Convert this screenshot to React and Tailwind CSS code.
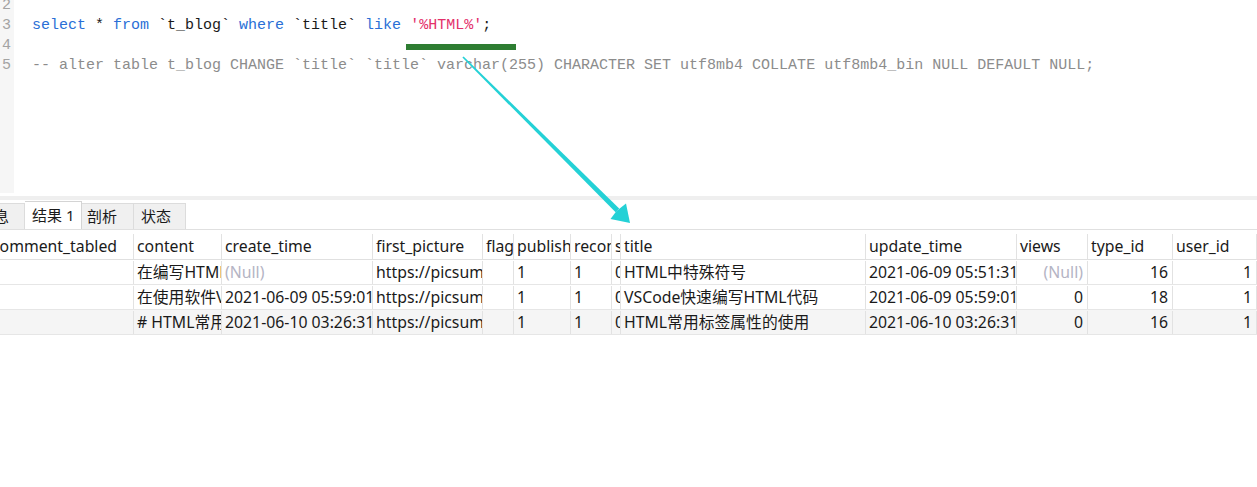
import React from "react";

const codeFont = { fontFamily: '"Liberation Mono", "DejaVu Sans Mono", monospace' };
const uiFont = { fontFamily: '"Noto Sans", "Noto Sans CJK SC", sans-serif' };

// column widths follow the grid lines in the result view
const columns = [
  { key: "comment_tabled", w: "w-[145px]" },
  { key: "content", w: "w-[88px]" },
  { key: "create_time", w: "w-[151px]" },
  { key: "first_picture", w: "w-[110px]" },
  { key: "flag", w: "w-[31px]" },
  { key: "publish", w: "w-[57px]" },
  { key: "recommend", w: "w-[41px]" },
  { key: "share_statement", w: "w-[9px]" },
  { key: "title", w: "w-[245px]" },
  { key: "update_time", w: "w-[151px]" },
  { key: "views", w: "w-[71px]", right: true },
  { key: "type_id", w: "w-[85px]", right: true },
  { key: "user_id", w: "w-[84px]", right: true },
];

const rows = [
  {
    comment_tabled: "",
    content: "在编写HTML页面时",
    create_time: null,
    first_picture: "https://picsum.photos",
    flag: "",
    publish: "1",
    recommend: "1",
    share_statement: "0",
    title: "HTML中特殊符号",
    update_time: "2021-06-09 05:51:31",
    views: null,
    type_id: "16",
    user_id: "1",
  },
  {
    comment_tabled: "",
    content: "在使用软件VSCode",
    create_time: "2021-06-09 05:59:01",
    first_picture: "https://picsum.photos",
    flag: "",
    publish: "1",
    recommend: "1",
    share_statement: "0",
    title: "VSCode快速编写HTML代码",
    update_time: "2021-06-09 05:59:01",
    views: "0",
    type_id: "18",
    user_id: "1",
  },
  {
    comment_tabled: "",
    content: "# HTML常用标签",
    create_time: "2021-06-10 03:26:31",
    first_picture: "https://picsum.photos",
    flag: "",
    publish: "1",
    recommend: "1",
    share_statement: "0",
    title: "HTML常用标签属性的使用",
    update_time: "2021-06-10 03:26:31",
    views: "0",
    type_id: "16",
    user_id: "1",
  },
];

const Kw = ({ children }) => <span className="text-[#2a6fd6]">{children}</span>;

const Cell = ({ col, children, isNull }) => (
  <div
    className={`${col.w} shrink-0 h-full border-r border-[#e2e2e2] overflow-hidden whitespace-nowrap flex items-center ${
      col.right ? "justify-end pr-[4px]" : "pl-[3px]"
    } ${isNull ? "text-[#b4b4c4]" : "text-[#1a1a1a]"}`}
  >
    {children}
  </div>
);

const App = () => {
  return (
    <div className="relative w-[1257px] h-[487px] overflow-hidden bg-white select-none">
      {/* Query editor */}
      <div className="flex h-[196px]" style={codeFont}>
        <div className="w-[14px] h-[193px] bg-[#f6f6f6] shrink-0 overflow-hidden">
          <div className="-mt-[4px] pl-[2px] text-[15px] leading-[20px] text-[#a3a3a3]">
            <div>2</div>
            <div>3</div>
            <div>4</div>
            <div>5</div>
          </div>
        </div>
        <div className="pl-[18px] -mt-[4px] text-[15px] leading-[20px] whitespace-pre text-[#1a1a1a]">
          <div> </div>
          <div>
            <Kw>select</Kw> * <Kw>from</Kw> `t_blog` <Kw>where</Kw> `title` <Kw>like</Kw>{" "}
            <span className="text-[#e3306a]">'%HTML%'</span>;
          </div>
          <div> </div>
          <div className="text-[#8c8c8c]">
            -- alter table t_blog CHANGE `title` `title` varchar(255) CHARACTER SET utf8mb4 COLLATE utf8mb4_bin NULL DEFAULT NULL;
          </div>
        </div>
      </div>

      {/* Splitter */}
      <div className="h-[4px] bg-[#efefef]" />

      {/* Result tabs */}
      <div className="flex items-end h-[29px] text-[15px] text-[#1a1a1a]" style={uiFont}>
        <div className="-ml-[28px] w-[53px] h-[26px] pl-[7px] flex items-center bg-[#f0f0f0] border-t border-r border-[#dcdcdc] shrink-0">
          信息
        </div>
        <div className="w-[57px] h-[28px] pl-[7px] flex items-center bg-white border-t border-r border-[#d4d4d4] shrink-0">
          结果 1
        </div>
        <div className="w-[52px] h-[26px] pl-[5px] flex items-center bg-[#f0f0f0] border-t border-r border-[#dcdcdc] shrink-0">
          剖析
        </div>
        <div className="w-[52px] h-[26px] pl-[7px] flex items-center bg-[#f0f0f0] border-t border-r border-[#dcdcdc] shrink-0">
          状态
        </div>
      </div>

      {/* Result grid */}
      <div className="-ml-[11px] text-[15.8px]" style={uiFont}>
        <div className="flex h-[31px] border-t border-b border-[#e0e0e0] pt-[4px]">
          {columns.map((col) => (
            <Cell key={col.key} col={{ ...col, right: false }}>
              {col.key}
            </Cell>
          ))}
        </div>
        {rows.map((row, i) => (
          <div
            key={i}
            className={`flex h-[25px] border-b border-[#e6e6e6] pt-[1px] ${i === 2 ? "bg-[#f5f5f5]" : "bg-white"}`}
          >
            {columns.map((col) => {
              const value = row[col.key];
              return (
                <Cell key={col.key} col={col} isNull={value === null}>
                  {value === null ? "(Null)" : value}
                </Cell>
              );
            })}
          </div>
        ))}
      </div>

      {/* Annotation: underline + arrow */}
      <div className="absolute left-[406px] top-[44px] w-[110px] h-[6px] bg-[#2e7d32]" />
      <svg className="absolute inset-0 pointer-events-none" width="1257" height="487">
        <polygon points="463.6,56.4 462.4,57.6 615.6,212.2 619.2,208.6" fill="#24d1d6" />
        <polygon points="630,223 610.5,219 616.5,211 626,203.5" fill="#24d1d6" />
      </svg>
    </div>
  );
};

export default App;
